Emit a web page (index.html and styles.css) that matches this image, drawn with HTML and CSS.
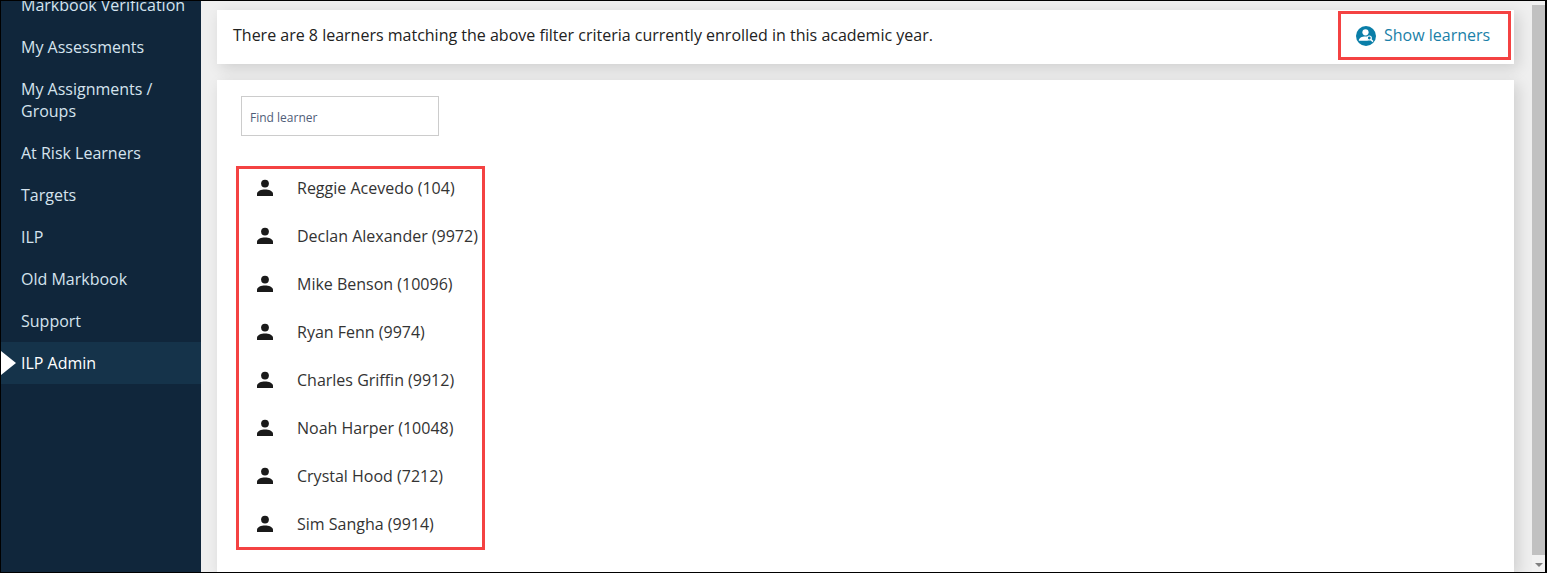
FILE: index.html
```html
<!DOCTYPE html>
<html lang="en">
<head>
    <meta charset="UTF-8">
    <meta name="viewport" content="width=device-width, initial-scale=1.0">
    <title>ILP Admin</title>
    <link rel="stylesheet" href="styles.css">
</head>
<body>
    <div class="frame">
        <nav class="sidebar">
            <ul class="nav-list">
                <li class="nav-item">Markbook Verification</li>
                <li class="nav-item">My Assessments</li>
                <li class="nav-item">My Assignments / Groups</li>
                <li class="nav-item">At Risk Learners</li>
                <li class="nav-item">Targets</li>
                <li class="nav-item">ILP</li>
                <li class="nav-item">Old Markbook</li>
                <li class="nav-item">Support</li>
                <li class="nav-item active">ILP Admin</li>
            </ul>
        </nav>

        <main class="content">
            <section class="panel summary">
                <p class="summary-text">There are 8 learners matching the above filter criteria currently enrolled in this academic year.</p>
                <a class="show-learners">
                    <svg class="show-icon" viewBox="0 0 20 20">
                        <circle cx="10" cy="10" r="10" fill="#0a7ea8"/>
                        <circle cx="9.500" cy="6.300" r="3.100" fill="#fff"/>
                        <path d="M2.800 14.800c0-3 2.900-4.400 6.700-4.400.6 0 1.100 0 1.500.1-.3 1.600.2 3.200 1.300 4.300z" fill="#fff"/>
                        <circle cx="13.300" cy="12" r="2" fill="#0a7ea8" stroke="#fff" stroke-width="1.200"/>
                        <path d="M14.800 13.500l2.200 2.100" stroke="#fff" stroke-width="1.500"/>
                    </svg>
                    Show learners
                </a>
            </section>

            <section class="panel learners">
                <input class="find-learner" type="text" placeholder="Find learner">
                <ul class="learner-list">
                    <li class="learner"><svg class="person" viewBox="0 0 18 18"><circle cx="9" cy="4.600" r="3.900"/><path d="M1 17v-2.200C1 11.900 5.400 10.500 9 10.500s8 1.400 8 4.300V17z"/></svg>Reggie Acevedo (104)</li>
                    <li class="learner"><svg class="person" viewBox="0 0 18 18"><circle cx="9" cy="4.600" r="3.900"/><path d="M1 17v-2.200C1 11.900 5.400 10.500 9 10.500s8 1.400 8 4.300V17z"/></svg>Declan Alexander (9972)</li>
                    <li class="learner"><svg class="person" viewBox="0 0 18 18"><circle cx="9" cy="4.600" r="3.900"/><path d="M1 17v-2.200C1 11.900 5.400 10.500 9 10.500s8 1.400 8 4.300V17z"/></svg>Mike Benson (10096)</li>
                    <li class="learner"><svg class="person" viewBox="0 0 18 18"><circle cx="9" cy="4.600" r="3.900"/><path d="M1 17v-2.200C1 11.900 5.400 10.500 9 10.500s8 1.400 8 4.300V17z"/></svg>Ryan Fenn (9974)</li>
                    <li class="learner"><svg class="person" viewBox="0 0 18 18"><circle cx="9" cy="4.600" r="3.900"/><path d="M1 17v-2.200C1 11.900 5.400 10.500 9 10.500s8 1.400 8 4.300V17z"/></svg>Charles Griffin (9912)</li>
                    <li class="learner"><svg class="person" viewBox="0 0 18 18"><circle cx="9" cy="4.600" r="3.900"/><path d="M1 17v-2.200C1 11.900 5.400 10.500 9 10.500s8 1.400 8 4.300V17z"/></svg>Noah Harper (10048)</li>
                    <li class="learner"><svg class="person" viewBox="0 0 18 18"><circle cx="9" cy="4.600" r="3.900"/><path d="M1 17v-2.200C1 11.900 5.400 10.500 9 10.500s8 1.400 8 4.300V17z"/></svg>Crystal Hood (7212)</li>
                    <li class="learner"><svg class="person" viewBox="0 0 18 18"><circle cx="9" cy="4.600" r="3.900"/><path d="M1 17v-2.200C1 11.900 5.400 10.500 9 10.500s8 1.400 8 4.300V17z"/></svg>Sim Sangha (9914)</li>
                </ul>
            </section>
        </main>

        <div class="scrollbar">
            <div class="scroll-thumb"></div>
            <div class="scroll-arrow"></div>
        </div>
    </div>
</body>
</html>
```

FILE: styles.css
```css
* {
    box-sizing: border-box;
}
html, body {
    height: 100%;
    margin: 0;
}
body {
    font-family: "Open Sans", Arial, sans-serif;
    font-size: 16px;
    overflow: hidden;
}
.frame {
    display: flex;
    height: 573px;
    border: 1px solid #000;
    border-right-width: 2px;
    background-color: #efefef;
    overflow: hidden;
}

/* sidebar */
.sidebar {
    position: relative;
    z-index: 1;
    width: 200px;
    flex-shrink: 0;
    background-color: #10263b;
    overflow: hidden;
}
.nav-list {
    list-style: none;
    margin: -17px 0 0;
    padding: 0;
}
.nav-item {
    position: relative;
    padding: 10px 10px 10px 20px;
    line-height: 22px;
    color: #d5e3ee;
}
.nav-item.active {
    background-color: #15334a;
    color: #fff;
}
.nav-item.active::before {
    content: "";
    position: absolute;
    left: 0;
    top: 9px;
    border-left: 15px solid #fff;
    border-top: 12px solid transparent;
    border-bottom: 12px solid transparent;
}

/* main */
.content {
    flex: 1;
    padding: 9px 18px 0 16px;
    display: flex;
    flex-direction: column;
    gap: 16px;
    min-width: 0;
}
.panel {
    background: #fff;
    box-shadow: 4px 4px 14px rgba(0,0,0,0.14);
}
.summary {
    height: 54px;
    padding: 1px 3px 0 16px;
    display: flex;
    align-items: flex-start;
    justify-content: space-between;
    flex-shrink: 0;
}
.summary-text {
    margin: 0;
    line-height: 48px;
    color: #222;
}
.show-learners {
    display: flex;
    align-items: center;
    gap: 8px;
    width: 173px;
    height: 49px;
    padding: 0 0 1px 15px;
    border: 3px solid #f44242;
    color: #1a7fa8;
}
.show-icon {
    width: 20px;
    height: 20px;
    margin-top: 1px;
    flex-shrink: 0;
}
.learners {
    flex: 1;
    padding: 16px 19px;
}
.find-learner {
    display: block;
    width: 198px;
    height: 40px;
    margin: 0 0 30px 5px;
    padding: 2px 8px 0;
    border: 1px solid #ccc;
    font-family: inherit;
    font-size: 12px;
    outline: none;
}
.find-learner::placeholder {
    color: #4f5d78;
    opacity: 1;
}
.learner-list {
    list-style: none;
    margin: 0;
    padding: 0;
    width: 249px;
    height: 384px;
    border: 3px solid #f44242;
}
.learner {
    display: flex;
    align-items: center;
    height: 48px;
    padding: 0 0 10px 17px;
    color: #333;
    white-space: nowrap;
}
.person {
    width: 18px;
    height: 18px;
    margin-right: 23px;
    flex-shrink: 0;
    fill: #1a1a1a;
}

/* fake scrollbar */
.scrollbar {
    position: relative;
    width: 13px;
    flex-shrink: 0;
    background: #f1f1f1;
}
.scroll-thumb {
    margin-top: 4px;
    height: 550px;
    background: #c1c1c1;
}
.scroll-arrow {
    position: absolute;
    left: 3px;
    bottom: 5px;
    border-top: 4px solid #808080;
    border-left: 4px solid transparent;
    border-right: 4px solid transparent;
}
```
